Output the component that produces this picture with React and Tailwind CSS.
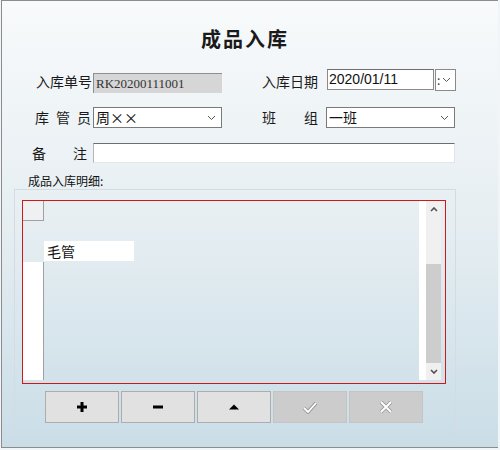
import React from "react";

function Chevron({ className = "" }) {
  return (
    <svg width="9" height="6" viewBox="0 0 9 6" className={className}>
      <polyline points="1,1 4.5,4.5 8,1" fill="none" stroke="#5a5a5a" strokeWidth="1" />
    </svg>
  );
}

function Select({ value, width }) {
  return (
    <div
      className={`${width} h-[21px] bg-white border border-[#7a7a7a] flex items-center justify-between pl-[2px] pr-[5px] text-[14px] leading-[19px] text-[#111]`}
    >
      <span>{value}</span>
      <Chevron />
    </div>
  );
}

function ToolButton({ children, disabled }) {
  return (
    <button
      className={`w-[74px] h-[32px] flex items-center justify-center border ${
        disabled ? "bg-[#cccccc] border-[#c4c4c4]" : "bg-[#e1e1e1] border-[#adadad]"
      }`}
    >
      {children}
    </button>
  );
}

export default function App() {
  return (
    <div className="w-[500px] h-[450px] bg-[#f2f5f7] font-['Noto_Sans_CJK_SC',sans-serif]">
      <div className="ml-[1px] w-[497px] h-[448px] flex flex-col border-l border-t border-b border-[#8c8c8c] bg-gradient-to-b from-[#f8fafb] via-[#e6eef2] to-[#cadde7]">
        {/* title */}
        <div className="mt-[24px] h-[28px] leading-[28px] pl-[199px] text-[20px] font-bold tracking-[2px] text-[#1a1a1a]">
          成品入库
        </div>

        {/* row 1 */}
        <div className="mt-[16px] h-[24px] flex items-start text-[14px] text-[#1a1a1a]">
          <div className="ml-[34px] w-[56px] leading-[24px]">入库单号</div>
          <div className="ml-[1px] mt-[4px] w-[129px] h-[20px] bg-[#d6d6d6] border-t border-l border-[#8f8f8f] border-r-[#c8c8c8] border-b-[#dcdcdc] pl-[2px] text-[13px] leading-[19px] text-[#333] font-['Liberation_Serif','Noto_Sans_CJK_SC',serif]">
            RK20200111001
          </div>
          <div className="ml-[40px] w-[56px] leading-[24px]">入库日期</div>
          <div className="ml-[9px] w-[107px] h-[21px] bg-white border border-[#8a8a8a] border-t-[#6e6e6e] pl-[1px] text-[14px] leading-[19px] text-[#111] font-['Liberation_Sans',sans-serif]">
            2020/01/11
          </div>
          <div className="ml-[1px] w-[21px] h-[22px] bg-white border border-[#8a8a8a] flex items-center pl-[1px] gap-[2px]">
            <span className="text-[12px] leading-[12px] text-[#333]">:</span>
            <Chevron />
          </div>
        </div>

        {/* row 2 */}
        <div className="mt-[14px] h-[21px] flex items-center text-[14px] text-[#1a1a1a]">
          <div className="ml-[33px] w-[56px] flex justify-between">
            <span>库</span>
            <span>管</span>
            <span>员</span>
          </div>
          <div className="ml-[2px]">
            <Select value="周××" width="w-[129px]" />
          </div>
          <div className="ml-[40px] w-[56px] flex justify-between">
            <span>班</span>
            <span>组</span>
          </div>
          <div className="ml-[8px]">
            <Select value="一班" width="w-[129px]" />
          </div>
        </div>

        {/* row 3 */}
        <div className="mt-[15px] h-[20px] flex items-center text-[14px] text-[#1a1a1a]">
          <div className="ml-[30px] w-[55px] flex justify-between">
            <span>备</span>
            <span>注</span>
          </div>
          <div className="ml-[6px] w-[362px] h-[20px] bg-white border border-[#e2e6ea] border-t-[#6d6d6d] border-l-[#b5b5b5]" />
        </div>

        {/* detail label */}
        <div className="mt-[10px] h-[16px] leading-[16px] pl-[26px] text-[12px] text-[#111]">
          成品入库明细:
        </div>

        {/* group panel */}
        <div className="ml-[12px] w-[442px] flex-1 mb-[6px] border-t border-l border-r border-[#d3dce2] flex flex-col">
          <div className="mt-[10px] ml-[7px] w-[424px] h-[184px] border border-[#d01818] flex">
            {/* row headers */}
            <div className="w-[21px] flex flex-col">
              <div className="h-[20px] bg-[#eef0f2] border-r border-b border-[#a0a0a0]" />
              <div className="h-[41px]" />
              <div className="h-[118px] bg-white border-r border-[#a0a0a0]" />
            </div>
            {/* cells */}
            <div className="flex-1 pt-[40px]">
              <div className="w-[90px] h-[20px] bg-white pl-[3px] text-[14px] leading-[20px] text-[#111]">
                毛管
              </div>
            </div>
            <div className="w-[7px] h-[179px] bg-white" />
            {/* scrollbar */}
            <div className="w-[15px] h-[179px] bg-[#f0f0f0] flex flex-col">
              <div className="h-[17px] flex items-center justify-center">
                <svg width="8" height="5" viewBox="0 0 8 5">
                  <polyline points="1,4 4,1 7,4" fill="none" stroke="#505050" strokeWidth="1.6" />
                </svg>
              </div>
              <div className="flex-1 flex flex-col justify-end">
                <div className="h-[99px] bg-[#cdcdcd]" />
              </div>
              <div className="h-[17px] flex items-center justify-center">
                <svg width="8" height="5" viewBox="0 0 8 5">
                  <polyline points="1,1 4,4 7,1" fill="none" stroke="#505050" strokeWidth="1.6" />
                </svg>
              </div>
            </div>
            <div className="w-[4px]" />
          </div>

          {/* buttons */}
          <div className="mt-[7px] ml-[30px] flex gap-[2px]">
            <ToolButton>
              <svg width="10" height="10" viewBox="0 0 10 10">
                <rect x="3.5" y="0" width="3" height="10" fill="#000" />
                <rect x="0" y="3.5" width="10" height="3" fill="#000" />
              </svg>
            </ToolButton>
            <ToolButton>
              <svg width="10" height="4" viewBox="0 0 10 4">
                <rect x="0" y="0.5" width="10" height="3" fill="#000" />
              </svg>
            </ToolButton>
            <ToolButton>
              <svg width="10" height="6" viewBox="0 0 10 6">
                <polygon points="0,5.5 5,0.5 10,5.5" fill="#000" />
              </svg>
            </ToolButton>
            <ToolButton disabled>
              <svg width="16" height="13" viewBox="0 0 16 13">
                <polyline points="2,7 6,11 14,2" fill="none" stroke="#979797" strokeWidth="3.6" />
                <polyline points="2,7 6,11 14,2" fill="none" stroke="#ffffff" strokeWidth="1.8" />
              </svg>
            </ToolButton>
            <ToolButton disabled>
              <svg width="14" height="14" viewBox="0 0 14 14">
                <path d="M2 2L12 12M12 2L2 12" fill="none" stroke="#979797" strokeWidth="3.8" />
                <path d="M2 2L12 12M12 2L2 12" fill="none" stroke="#ffffff" strokeWidth="2" />
              </svg>
            </ToolButton>
          </div>
        </div>
      </div>
    </div>
  );
}
